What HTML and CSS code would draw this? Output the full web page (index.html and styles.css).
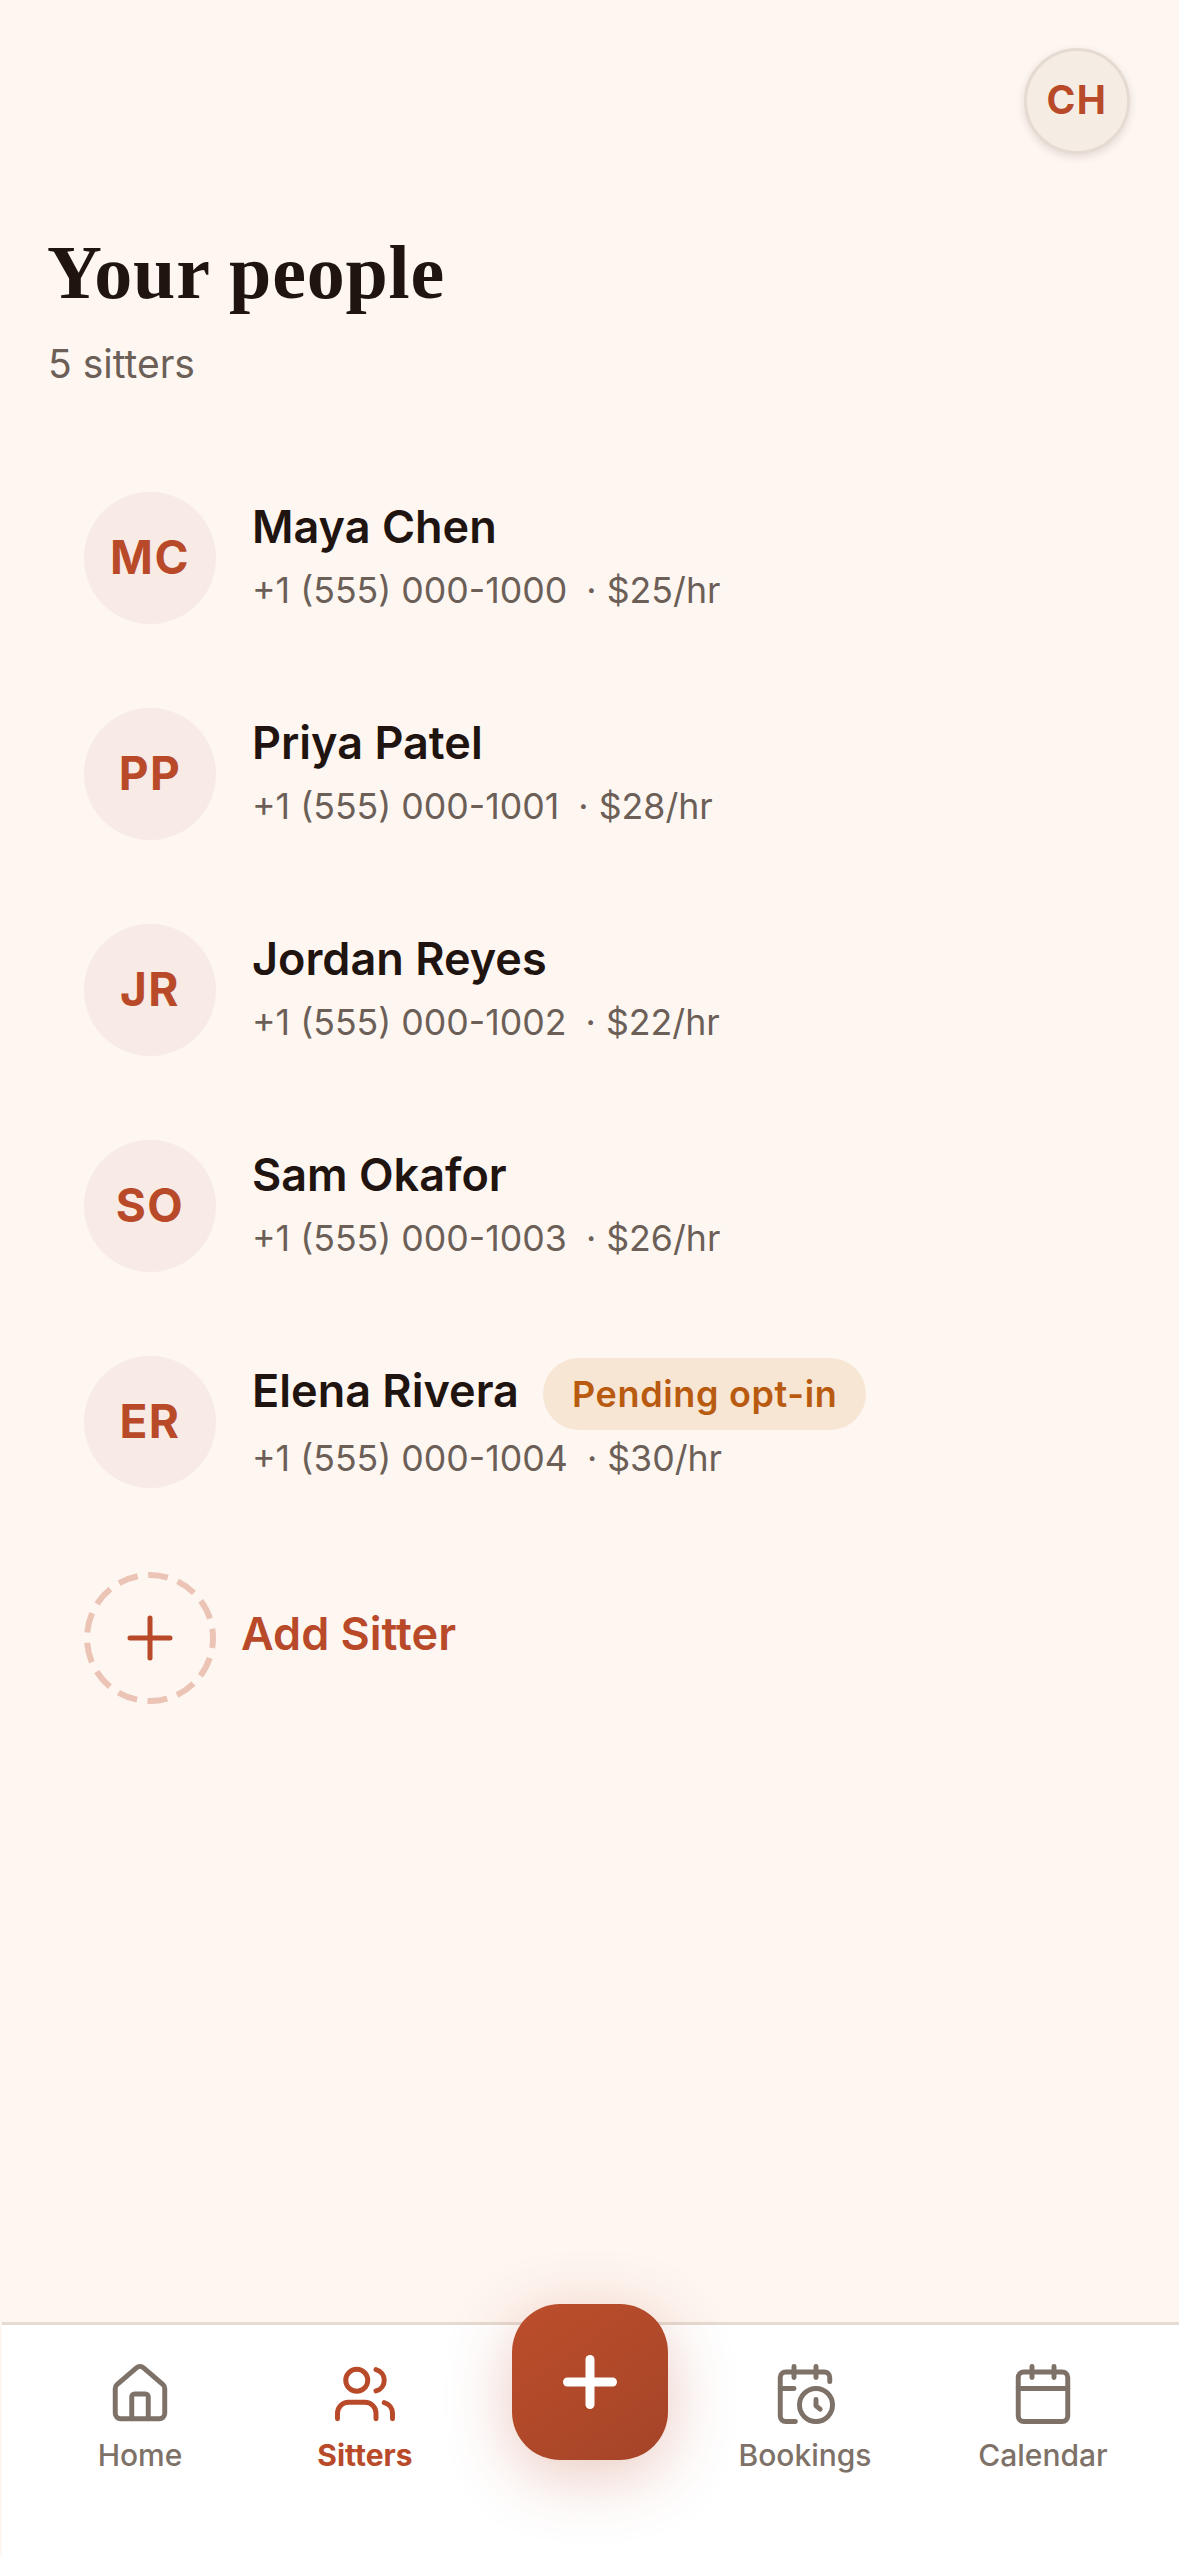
FILE: index.html
```html
<!DOCTYPE html>
<html lang="en">
<head>
<meta charset="utf-8">
<title>Your people</title>
<link rel="stylesheet" href="styles.css">
</head>
<body>
<div class="app">
  <main class="main">
    <div class="topbar"><div class="me">CH</div></div>
    <h1 class="title">Your people</h1>
    <p class="count">5 sitters</p>
    <ul class="list">
      <li class="row"><div class="avatar">MC</div><div class="info"><div class="name-line"><span class="name">Maya Chen</span></div><div class="meta"><span>+1 (555) 000-1000</span><span>· $25/hr</span></div></div></li>
      <li class="row"><div class="avatar">PP</div><div class="info"><div class="name-line"><span class="name">Priya Patel</span></div><div class="meta"><span>+1 (555) 000-1001</span><span>· $28/hr</span></div></div></li>
      <li class="row"><div class="avatar">JR</div><div class="info"><div class="name-line"><span class="name">Jordan Reyes</span></div><div class="meta"><span>+1 (555) 000-1002</span><span>· $22/hr</span></div></div></li>
      <li class="row"><div class="avatar">SO</div><div class="info"><div class="name-line"><span class="name">Sam Okafor</span></div><div class="meta"><span>+1 (555) 000-1003</span><span>· $26/hr</span></div></div></li>
      <li class="row"><div class="avatar">ER</div><div class="info"><div class="name-line"><span class="name">Elena Rivera</span><span class="badge">Pending opt-in</span></div><div class="meta"><span>+1 (555) 000-1004</span><span>· $30/hr</span></div></div></li>
      <li class="row add-row">
        <svg class="add-circle" viewBox="0 0 132 132"><circle class="add-ring" cx="66" cy="66" r="63"/><path class="add-plus" d="M66 46v40M46 66h40"/></svg>
        <span class="add-label">Add Sitter</span>
      </li>
    </ul>
  </main>
  <nav class="nav">
    <a class="tab">
      <svg class="icon" viewBox="0 0 24 24"><path d="M15 21v-8a1 1 0 0 0-1-1h-4a1 1 0 0 0-1 1v8"/><path d="M3 10a2 2 0 0 1 .709-1.528l7-5.999a2 2 0 0 1 2.582 0l7 5.999A2 2 0 0 1 21 10v9a2 2 0 0 1-2 2H5a2 2 0 0 1-2-2z"/></svg>
      <span>Home</span>
    </a>
    <a class="tab active">
      <svg class="icon" viewBox="0 0 24 24"><path d="M16 21v-2a4 4 0 0 0-4-4H6a4 4 0 0 0-4 4v2"/><circle cx="9" cy="7" r="4"/><path d="M22 21v-2a4 4 0 0 0-3-3.87"/><path d="M16 3.13a4 4 0 0 1 0 7.75"/></svg>
      <span>Sitters</span>
    </a>
    <div class="fab-cell">
      <button class="fab"><svg class="fab-plus" viewBox="0 0 54 54"><path d="M4.5 27h45"/><path d="M27 4.500v45"/></svg></button>
    </div>
    <a class="tab">
      <svg class="icon" viewBox="0 0 24 24"><path d="M21 7.5V6a2 2 0 0 0-2-2H5a2 2 0 0 0-2 2v14a2 2 0 0 0 2 2h3.5"/><path d="M16 2v4"/><path d="M8 2v4"/><path d="M3 10h5"/><path d="M17.5 17.5 16 16.3V14"/><circle cx="16" cy="16" r="6"/></svg>
      <span>Bookings</span>
    </a>
    <a class="tab">
      <svg class="icon" viewBox="0 0 24 24"><path d="M8 2v4"/><path d="M16 2v4"/><rect x="3" y="4" width="18" height="18" rx="2"/><path d="M3 10h18"/></svg>
      <span>Calendar</span>
    </a>
  </nav>
</div>
</body>
</html>
```
FILE: styles.css
```css
* { box-sizing: border-box; }
html, body { margin: 0; padding: 0; }
body {
  background: #fef6f1;
  font-family: Inter, "Noto Sans", sans-serif;
  color: #1f1410;
}
.app {
  width: 1179px;
  height: 2556px;
  display: flex;
  flex-direction: column;
  overflow: hidden;
}
.main {
  flex: 1;
  padding: 48px 48px 0;
}
.topbar {
  display: flex;
  justify-content: flex-end;
  padding-right: 1px;
}
.me {
  width: 106px;
  height: 106px;
  border-radius: 50%;
  background: #f5ede4;
  border: 3px solid #e5dbd2;
  box-shadow: 0 3px 9px rgba(31, 20, 16, 0.12);
  color: #b84a2a;
  font-size: 39px;
  font-weight: 700;
  letter-spacing: 1.5px;
  padding-bottom: 3px;
  display: flex;
  align-items: center;
  justify-content: center;
}
.title {
  margin: 72px 0 0 -1px;
  font-family: "Liberation Serif", serif;
  font-weight: 700;
  font-size: 76px;
  letter-spacing: 0.8px;
  line-height: 92px;
  color: #1f1410;
}
.count {
  margin: 22px 0 0;
  font-size: 39px;
  line-height: 48px;
  color: #6b5f57;
}
.list {
  list-style: none;
  margin: 0;
  padding: 104px 0 0 36px;
  display: flex;
  flex-direction: column;
  gap: 84px;
}
.row {
  display: flex;
  align-items: flex-start;
  height: 132px;
}
.avatar {
  width: 132px;
  height: 132px;
  border-radius: 50%;
  background: #f8eae4;
  color: #b84a2a;
  font-size: 46px;
  font-weight: 700;
  letter-spacing: 1.5px;
  padding-bottom: 3px;
  display: flex;
  align-items: center;
  justify-content: center;
  flex: none;
}
.info {
  margin-left: 36px;
  padding-top: 7px;
  display: flex;
  flex-direction: column;
  gap: 13px;
}
.name-line {
  display: flex;
  align-items: baseline;
  gap: 24px;
}
.name {
  font-size: 45px;
  line-height: 56px;
  font-weight: 600;
  color: #1f1410;
}
.badge {
  height: 72px;
  margin: -8px 0 -7px;
  padding: 0 29px;
  border-radius: 36px;
  background: #f7e6d4;
  color: #b85a0f;
  font-size: 36px;
  font-weight: 600;
  letter-spacing: 0.65px;
  display: flex;
  align-items: center;
}
.meta {
  display: flex;
  gap: 19px;
  font-size: 35.7px;
  line-height: 44px;
  color: #6b5f57;
}
.add-row {
  align-items: center;
}
.add-circle {
  width: 132px;
  height: 132px;
  flex: none;
  fill: none;
}
.add-ring {
  stroke: #ecc4b6;
  stroke-width: 6;
  stroke-dasharray: 20 10.45;
  stroke-dashoffset: 10;
}
.add-plus {
  stroke: #b84a2a;
  stroke-width: 5;
  stroke-linecap: round;
}
.add-label {
  margin-left: 25px;
  margin-top: -9px;
  font-size: 45px;
  font-weight: 600;
  color: #b84a2a;
}
.nav {
  height: 234px;
  flex: none;
  margin-left: 2px;
  background: #fff;
  border-top: 3px solid #e5dbd2;
  display: grid;
  grid-template-columns: 198px 252px 197px 234px 242px;
  padding-left: 39px;
  color: #7d7168;
}
.tab {
  display: flex;
  flex-direction: column;
  align-items: center;
  padding-top: 36px;
  font-size: 30px;
  line-height: 36px;
  font-weight: 500;
}
.tab.active {
  color: #b84a2a;
  font-weight: 700;
}
.icon {
  width: 66px;
  height: 66px;
  fill: none;
  stroke: currentColor;
  stroke-width: 1.8;
  stroke-linecap: round;
  stroke-linejoin: round;
  margin-bottom: 10px;
}
.fab-cell {
  display: flex;
  justify-content: center;
}
.fab {
  position: relative;
  width: 156px;
  height: 156px;
  margin-top: -21px;
  border: none;
  border-radius: 48px;
  background: linear-gradient(145deg, #bc4e2b, #a54428);
  box-shadow: 0 15px 66px rgba(184, 74, 42, 0.3);
  display: flex;
  align-items: center;
  justify-content: center;
  padding: 0;
}
.fab-plus {
  width: 54px;
  height: 54px;
  fill: none;
  stroke: #fff;
  stroke-width: 9;
  stroke-linecap: round;
}
```
